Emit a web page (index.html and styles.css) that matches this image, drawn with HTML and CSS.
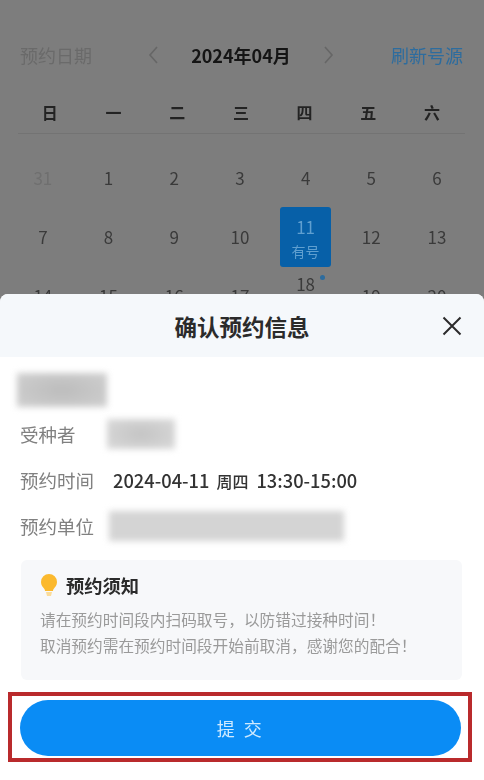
FILE: index.html
```html
<!DOCTYPE html>
<html lang="zh-CN">
<head>
    <meta charset="UTF-8">
    <meta name="viewport" content="width=device-width, initial-scale=1.0">
    <title>确认预约信息</title>
    <link rel="stylesheet" href="styles.css">
</head>
<body>
    <div class="page">
        <div class="calendar">
            <div class="cal-head">
                <span class="cal-label">预约日期</span>
                <svg class="cal-arrow" width="12" height="20" viewBox="0 0 12 20"><path d="M10 2 3 10l7 8" fill="none" stroke="#666" stroke-width="1.6"/></svg>
                <span class="cal-month">2024年04月</span>
                <svg class="cal-arrow" width="12" height="20" viewBox="0 0 12 20"><path d="M2 2l7 8-7 8" fill="none" stroke="#666" stroke-width="1.6"/></svg>
                <span class="cal-refresh">刷新号源</span>
            </div>
            <div class="week">
                <span>日</span><span>一</span><span>二</span><span>三</span><span>四</span><span>五</span><span>六</span>
            </div>
            <div class="days">
                <span class="day muted">31</span>
                <span class="day">1</span>
                <span class="day">2</span>
                <span class="day">3</span>
                <span class="day">4</span>
                <span class="day">5</span>
                <span class="day">6</span>
                <span class="day">7</span>
                <span class="day">8</span>
                <span class="day">9</span>
                <span class="day">10</span>
                <span class="day selected"><b>11</b><small>有号</small></span>
                <span class="day">12</span>
                <span class="day">13</span>
                <span class="day">14</span>
                <span class="day">15</span>
                <span class="day">16</span>
                <span class="day">17</span>
                <span class="day raised">18<i class="dot"></i></span>
                <span class="day">19</span>
                <span class="day">20</span>
            </div>
        </div>

        <div class="sheet">
            <div class="sheet-head">
                <h2>确认预约信息</h2>
                <svg class="close" width="20" height="20" viewBox="0 0 20 20"><path d="M1.500 1.500l17 17M18.500 1.500l-17 17" stroke="#2b2b2b" stroke-width="2"/></svg>
            </div>
            <div class="sheet-body">
                <div class="redact redact-name"></div>
                <div class="row row-person">
                    <span class="row-label">受种者</span>
                    <div class="redact redact-person"></div>
                </div>
                <div class="row">
                    <span class="row-label">预约时间</span>
                    <span class="row-value">2024-04-11<em>周四</em>13:30-15:00</span>
                </div>
                <div class="row">
                    <span class="row-label">预约单位</span>
                    <div class="redact redact-unit"></div>
                </div>
                <div class="notice">
                    <div class="notice-title">
                        <svg class="bulb" width="18" height="24" viewBox="0 0 18 24"><path d="M9 1a8 8 0 0 0-8 8c0 3.200 1.800 5 3 6.500.8 1 1 1.800 1 2.500h8c0-.7.2-1.500 1-2.500 1.200-1.500 3-3.300 3-6.500a8 8 0 0 0-8-8z" fill="#fbb92e"/><path d="M6 19h6l-1 4H7z" fill="#fbdc9a"/></svg>
                        <span>预约须知</span>
                    </div>
                    <p>请在预约时间段内扫码取号，以防错过接种时间！<br>取消预约需在预约时间段开始前取消，感谢您的配合！</p>
                </div>
            </div>
            <div class="submit-mark">
                <button class="submit">提 交</button>
            </div>
        </div>
    </div>
</body>
</html>
```

FILE: styles.css
```css
html, body {
    margin: 0;
    padding: 0;
}

body {
    width: 484px;
    height: 780px;
    overflow: hidden;
    background-color: #7d7d7d;
    font-family: "Noto Sans CJK SC", "Noto Sans", sans-serif;
}

.page {
    position: relative;
    height: 780px;
    overflow: hidden;
    filter: blur(0.5px);
}

/* dimmed calendar behind the sheet */
.calendar {
    padding-top: 40px;
}

.cal-head {
    display: flex;
    align-items: center;
    height: 30px;
    padding: 0 21px 0 20px;
    font-size: 18px;
}

.cal-label {
    color: #6a6a6a;
    width: 127px;
}

.cal-month {
    width: 164px;
    text-align: center;
    color: #151515;
    font-weight: 700;
}

.cal-arrow {
    flex: none;
}

.cal-refresh {
    margin-left: auto;
    color: #2d6c9e;
}

.week {
    display: grid;
    grid-template-columns: repeat(7, 63.700px);
    margin: 31px 19px 0 18px;
    padding-bottom: 10px;
    line-height: 22px;
    border-bottom: 1px solid #737373;
    font-size: 16px;
    font-weight: 700;
    color: #232323;
    text-align: center;
}

.days {
    display: grid;
    grid-template-columns: repeat(7, 65.700px);
    grid-auto-rows: 59px;
    margin: 14px 0 0 10px;
    font-size: 17px;
    color: #3a3a3a;
    text-align: center;
}

.day {
    position: relative;
    display: flex;
    flex-direction: column;
    align-items: center;
    justify-content: center;
}

.day.muted {
    color: #6f6f6f;
}

.day.selected {
    width: 51px;
    height: 60px;
    justify-self: center;
    align-self: center;
    border-radius: 3px;
    background-color: #0760a8;
    color: #5f9fd0;
}

.day.selected b {
    font-weight: 400;
    font-size: 17px;
    line-height: 28px;
}

.day.selected small {
    font-size: 14px;
    line-height: 20px;
}

.day.raised {
    justify-content: flex-start;
    line-height: 24px;
    top: 6px;
}

.dot {
    position: absolute;
    top: 3px;
    left: 47px;
    width: 5px;
    height: 5px;
    border-radius: 50%;
    background-color: #2d6c9e;
}

/* bottom sheet */
.sheet {
    position: absolute;
    left: 0;
    right: 0;
    top: 294px;
    bottom: 0;
    border-radius: 8px 8px 0 0;
    background-color: #fff;
    overflow: hidden;
}

.sheet-head {
    position: relative;
    height: 63px;
    display: flex;
    align-items: center;
    justify-content: center;
    background-color: #f5f8fb;
}

.sheet-head h2 {
    margin: 0;
    font-size: 22.500px;
    font-weight: 700;
    color: #2b2b2b;
}

.close {
    position: absolute;
    right: 22px;
    top: 22px;
}

.sheet-body {
    padding: 16px 22px 0 20px;
}

.redact {
    background-color: #cccccc;
    filter: blur(3px);
}

.redact-name {
    width: 90px;
    height: 34px;
    margin-left: -3px;
    background-image: radial-gradient(ellipse at center, #bcbcbc, #d0d0d0);
}

.redact-person {
    width: 68px;
    height: 30px;
    margin-left: 31px;
    background-image: radial-gradient(ellipse at center, #c4c4c4, #dadada);
}

.redact-unit {
    width: 235px;
    height: 30px;
    margin-left: 15px;
    background-color: #d4d4d4;
}

.row {
    display: flex;
    align-items: center;
    height: 46px;
    font-size: 18.500px;
}

.row-person {
    margin-top: 4px;
}

.row-label {
    color: #808080;
}

.row-value {
    margin-left: 19px;
    font-size: 18.300px;
    font-weight: 500;
    color: #333;
    white-space: nowrap;
}

.row-value em {
    margin: 0 8px 0 7px;
    font-style: normal;
    font-size: 16px;
}

.notice {
    margin-top: 11px;
    margin-left: 1px;
    height: 120px;
    box-sizing: border-box;
    padding: 12px 20px 12px 19px;
    border-radius: 6px;
    background-color: #f7f8fa;
}

.notice-title {
    display: flex;
    align-items: center;
    gap: 8px;
    height: 26px;
    font-size: 18.300px;
    font-weight: 700;
    color: #2b2b2b;
}

.bulb {
    flex: none;
}

.notice p {
    margin: 9px 0 0;
    font-size: 15.700px;
    line-height: 26px;
    color: #9a9a9a;
    white-space: nowrap;
}

.submit-mark {
    margin: 12px 12px 0 8px;
    height: 70px;
    box-sizing: border-box;
    padding: 4px 7px 2px 8px;
    border: 4px solid #b92a2c;
}

.submit {
    display: block;
    width: 100%;
    height: 56px;
    border: none;
    border-radius: 28px;
    background-color: #0a8cf5;
    color: #cfeaff;
    font-family: inherit;
    font-size: 18px;
    letter-spacing: 2.500px;
}
```
